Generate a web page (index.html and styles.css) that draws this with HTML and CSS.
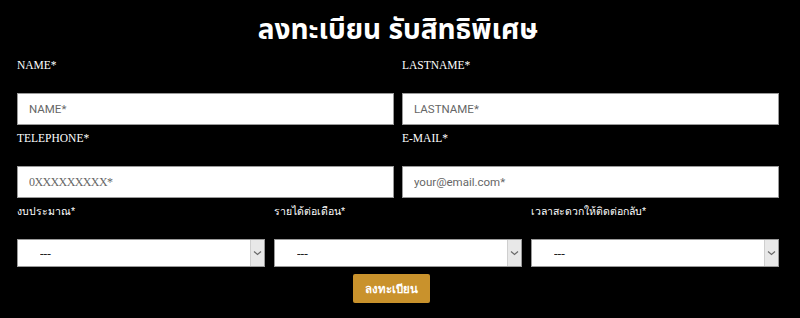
FILE: index.html
```html
<!DOCTYPE html>
<html lang="th">
<head>
<meta charset="utf-8">
<link rel="stylesheet" href="styles.css">
</head>
<body>
<div class="wrap">
  <h1 class="title">ลงทะเบียน รับสิทธิพิเศษ</h1>
  <div class="row two">
    <div class="field">
      <label class="lbl">NAME*</label>
      <input class="inp" type="text" placeholder="NAME*">
    </div>
    <div class="field">
      <label class="lbl">LASTNAME*</label>
      <input class="inp" type="text" placeholder="LASTNAME*">
    </div>
  </div>
  <div class="row two">
    <div class="field">
      <label class="lbl">TELEPHONE*</label>
      <input class="inp serif" type="text" placeholder="0XXXXXXXXX*">
    </div>
    <div class="field">
      <label class="lbl">E-MAIL*</label>
      <input class="inp" type="text" placeholder="your@email.com*">
    </div>
  </div>
  <div class="row three">
    <div class="field">
      <label class="lbl thai">งบประมาณ*</label>
      <div class="sel"><select><option>---</option></select><span class="arrow"><svg width="9" height="6" viewBox="0 0 9 6"><path d="M1 1.5 L4.5 4.5 L8 1.5" fill="none" stroke="#6a6a6a" stroke-width="1.2"/></svg></span></div>
    </div>
    <div class="field">
      <label class="lbl thai">รายได้ต่อเดือน*</label>
      <div class="sel"><select><option>---</option></select><span class="arrow"><svg width="9" height="6" viewBox="0 0 9 6"><path d="M1 1.5 L4.5 4.5 L8 1.5" fill="none" stroke="#6a6a6a" stroke-width="1.2"/></svg></span></div>
    </div>
    <div class="field">
      <label class="lbl thai">เวลาสะดวกให้ติดต่อกลับ*</label>
      <div class="sel"><select><option>---</option></select><span class="arrow"><svg width="9" height="6" viewBox="0 0 9 6"><path d="M1 1.5 L4.5 4.5 L8 1.5" fill="none" stroke="#6a6a6a" stroke-width="1.2"/></svg></span></div>
    </div>
  </div>
  <div class="actions">
    <button class="btn" type="button">ลงทะเบียน</button>
  </div>
</div>
</body>
</html>
```
FILE: styles.css
```css
html, body {
  margin: 0;
  padding: 0;
  background: #000;
}
.wrap {
  padding: 0 21px 0 17px;
}
.title {
  margin: 0;
  padding-top: 10px;
  height: 47px;
  text-align: center;
  color: #fff;
  font-family: "Noto Sans", "Noto Sans Thai", sans-serif;
  font-size: 28px;
  line-height: 36px;
  font-weight: 700;
}
.row {
  display: grid;
  column-gap: 8px;
  margin-bottom: 5px;
}
.row.two {
  grid-template-columns: 1fr 1fr;
}
.row.three {
  grid-template-columns: 248px 248px 248px;
  column-gap: 9px;
  margin-bottom: 7px;
}
.field {
  display: flex;
  flex-direction: column;
}
.lbl {
  display: block;
  color: #fff;
  font-family: "Liberation Serif", serif;
  font-size: 11.5px;
  line-height: 16px;
  height: 16px;
  margin-bottom: 20px;
}
.lbl.thai {
  font-family: "Liberation Sans", "Noto Sans", sans-serif;
  font-size: 10.5px;
}
.inp {
  box-sizing: border-box;
  height: 32px;
  width: 100%;
  margin: 0;
  border: 1px solid #9a9a9a;
  background: #fff;
  padding: 0 11px;
  font-family: Roboto, "Liberation Sans", sans-serif;
  font-size: 11.5px;
  color: #333;
  outline: none;
}
.inp.serif {
  font-family: "Liberation Serif", serif;
  font-size: 12px;
  letter-spacing: -0.6px;
}
.inp::placeholder {
  color: #666;
}
.sel {
  position: relative;
  height: 28px;
}
.sel select {
  appearance: none;
  -webkit-appearance: none;
  box-sizing: border-box;
  width: 100%;
  height: 28px;
  margin: 0;
  border: 1px solid #9a9a9a;
  border-radius: 0;
  background: #fff;
  padding: 0 0 0 22px;
  font-family: Roboto, "Liberation Sans", sans-serif;
  font-size: 13px;
  color: #222;
  outline: none;
}
.arrow {
  position: absolute;
  top: 1px;
  right: 1px;
  bottom: 1px;
  width: 13px;
  background: #e8e8e8;
  border-left: 1px solid #cfcfcf;
  display: flex;
  align-items: center;
  justify-content: center;
}
.actions {
  display: flex;
  justify-content: center;
  padding-right: 13px;
}
.btn {
  box-sizing: border-box;
  width: 77px;
  height: 29px;
  border: 0;
  border-radius: 2px;
  background: #c9922c;
  color: #fff;
  font-family: "Noto Sans", sans-serif;
  font-size: 11.5px;
  font-weight: 700;
  padding: 0;
}
```
